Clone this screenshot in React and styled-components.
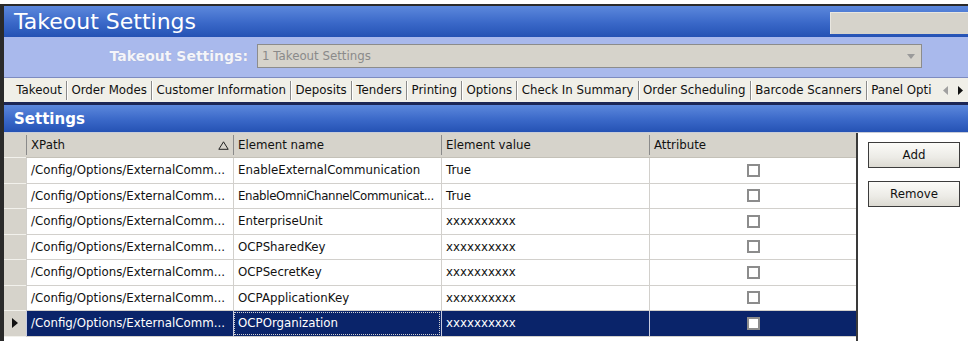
import React from "react";
import styled, { createGlobalStyle } from "styled-components";

const Global = createGlobalStyle`
  html, body { margin: 0; padding: 0; background: #fff; }
  body { font-family: "DejaVu Sans", sans-serif; }
`;

const Page = styled.div`
  width: 968px;
  height: 343px;
  padding-top: 4px;
  box-sizing: border-box;
  overflow: hidden;
  background: #fff;
`;

const Win = styled.div`
  border-top: 2px solid #2a2a2a;
  border-left: 4px solid #2a2a2a;
  height: 337px;
  box-sizing: border-box;
  display: flex;
  flex-direction: column;
`;

const TitleBar = styled.div`
  height: 31px;
  flex: none;
  background: linear-gradient(#5c88dc, #3a68c8 55%, #2552b4);
  display: flex;
  justify-content: space-between;
  align-items: flex-start;
`;

const Title = styled.div`
  color: #fff;
  font-family: "DejaVu Sans", sans-serif;
  font-size: 22px;
  line-height: 32px;
  padding-left: 10px;
`;

const CornerBox = styled.div`
  width: 138px;
  height: 22px;
  margin-top: 6px;
  background: #d6d3cb;
  border-top: 1px solid #e8e6e0;
  border-left: 1px solid #e8e6e0;
  box-sizing: border-box;
`;

const SubBar = styled.div`
  height: 41px;
  flex: none;
  background: #a9b9ec;
  border-bottom: 1px solid #7d8bc0;
  display: flex;
  align-items: center;
  box-sizing: border-box;
  padding-bottom: 2px;
`;

const SubLabel = styled.div`
  width: 244px;
  text-align: right;
  font-family: "DejaVu Sans", sans-serif;
  font-weight: bold;
  font-size: 14px;
  color: #f4f5fb;
  text-shadow: 0 0 1px #9aa0c0;
`;

const Select = styled.div`
  margin-left: 9px;
  width: 665px;
  height: 24px;
  box-sizing: border-box;
  background: #d6d3cb;
  border: 1px solid #8c8c8c;
  display: flex;
  align-items: center;
  justify-content: space-between;
  padding: 0 6px 0 4px;
  color: #8a8a8a;
  font-size: 11.8px;
`;

const TabBar = styled.div`
  height: 27px;
  flex: none;
  background: #f0efe8;
  border-bottom: 3px solid #1c2655;
  box-sizing: border-box;
  display: flex;
  align-items: center;
  padding-left: 8px;
  font-size: 11.8px;
  color: #111;
  white-space: nowrap;
  overflow: hidden;
`;

const Tab = styled.div`
  padding: 0 4.3px;
  height: 19px;
  line-height: 19px;
  border-right: ${(p) => (p.last ? "none" : "1px solid #8a8a8a")};
  box-shadow: ${(p) => (p.last ? "none" : "1px 0 0 #fff")};
  flex: none;
`;

const Arrows = styled.div`
  display: flex;
  gap: 10px;
  align-items: center;
  margin-left: 7px;
`;

const SettingsBar = styled.div`
  height: 28px;
  flex: none;
  box-sizing: border-box;
  background: linear-gradient(#5c88dc, #3a68c8 55%, #2552b4);
  color: #fff;
  font-family: "DejaVu Sans", sans-serif;
  font-weight: bold;
  font-size: 15px;
  display: flex;
  align-items: center;
  padding-left: 10px;
  border-bottom: 1px solid #c8ccd8;
`;

const Body = styled.div`
  flex: 1;
  display: flex;
  background: #fff;
`;

const Grid = styled.div`
  width: 854px;
  border-right: 2px solid #3a3a3a;
  box-sizing: border-box;
  display: flex;
  flex-direction: column;
`;

const Row = styled.div`
  display: grid;
  grid-template-columns: 22px 207px 208px 208px 207px;
  height: ${(p) => (p.header ? "25px" : "25.5px")};
  flex: none;
  box-sizing: border-box;
  font-size: 11.8px;
  background: ${(p) => (p.header ? "#d6d3cb" : p.selected ? "#0a246a" : "#fff")};
  color: ${(p) => (p.selected ? "#fff" : "#111")};
  border-bottom: 1px solid ${(p) => (p.header ? "#c4c1b8" : "#d2d0cc")};
`;

const Selector = styled.div`
  background: #d6d3cb;
  border-bottom: 1px solid #f2f1ec;
  margin-bottom: -1px;
  display: flex;
  align-items: center;
  justify-content: center;
`;

const HeadCell = styled.div`
  border-left: 1px solid #8a8a8a;
  margin: 2px 0;
  padding: 0 4px;
  display: flex;
  align-items: center;
  justify-content: space-between;
`;

const Cell = styled.div`
  border-left: 1px solid ${(p) => (p.selected ? "#c8cce0" : "#d2d0cc")};
  padding: 0 4px;
  display: flex;
  align-items: center;
  justify-content: ${(p) => (p.center ? "center" : "flex-start")};
  white-space: nowrap;
  overflow: hidden;
  letter-spacing: ${(p) => (p.tight ? "-0.35px" : "normal")};
  outline: ${(p) => (p.focus ? "1px dotted #d0d0d0" : "none")};
  outline-offset: -2px;
`;

const Check = styled.div`
  width: 13px;
  height: 13px;
  box-sizing: border-box;
  border: 2px solid #8c8c8c;
  background: ${(p) => (p.selected ? "#fff" : "transparent")};
`;

const Side = styled.div`
  display: flex;
  flex-direction: column;
  gap: 13px;
  padding: 9px 0 0 10px;
`;

const Button = styled.button`
  width: 92px;
  height: 26px;
  border: 1px solid #3c3c3c;
  background: linear-gradient(#fbfbf8, #ecebe6 60%, #dcdad2);
  font-family: "DejaVu Sans", sans-serif;
  font-size: 11.8px;
  color: #111;
  padding: 0;
`;

const tabs = [
  "Takeout",
  "Order Modes",
  "Customer Information",
  "Deposits",
  "Tenders",
  "Printing",
  "Options",
  "Check In Summary",
  "Order Scheduling",
  "Barcode Scanners",
  "Panel Opti",
];

const rows = [
  ["EnableExternalCommunication", "True"],
  ["EnableOmniChannelCommunicat...", "True"],
  ["EnterpriseUnit", "xxxxxxxxxx"],
  ["OCPSharedKey", "xxxxxxxxxx"],
  ["OCPSecretKey", "xxxxxxxxxx"],
  ["OCPApplicationKey", "xxxxxxxxxx"],
  ["OCPOrganization", "xxxxxxxxxx"],
];

export default function App() {
  return (
    <Page>
      <Global />
      <Win>
        <TitleBar>
          <Title>Takeout Settings</Title>
          <CornerBox />
        </TitleBar>
        <SubBar>
          <SubLabel>Takeout Settings:</SubLabel>
          <Select>
            <span>1 Takeout Settings</span>
            <svg width="8" height="5" viewBox="0 0 8 5">
              <path d="M0 0h8L4 5z" fill="#9a9a9a" />
            </svg>
          </Select>
        </SubBar>
        <TabBar>
          {tabs.map((t, i) => (
            <Tab key={t} last={i === tabs.length - 1}>
              {t}
            </Tab>
          ))}
          <Arrows>
            <svg width="5" height="9" viewBox="0 0 5 9">
              <path d="M5 0v9L0 4.5z" fill="#a0a0a0" />
            </svg>
            <svg width="5" height="9" viewBox="0 0 5 9">
              <path d="M0 0v9l5-4.5z" fill="#111" />
            </svg>
          </Arrows>
        </TabBar>
        <SettingsBar>Settings</SettingsBar>
        <Body>
          <Grid>
            <Row header>
              <Selector />
              <HeadCell>
                <span>XPath</span>
                <svg width="11" height="9" viewBox="0 0 11 9">
                  <path d="M5.5 0.8L10.2 8.3H0.8z" fill="none" stroke="#222" strokeWidth="1" />
                </svg>
              </HeadCell>
              <HeadCell>Element name</HeadCell>
              <HeadCell>Element value</HeadCell>
              <HeadCell>Attribute</HeadCell>
            </Row>
            {rows.map(([name, value], i) => {
              const sel = i === rows.length - 1;
              return (
                <Row key={name} selected={sel}>
                  <Selector>
                    {sel && (
                      <svg width="6" height="10" viewBox="0 0 6 10">
                        <path d="M0 0v10l6-5z" fill="#111" />
                      </svg>
                    )}
                  </Selector>
                  <Cell selected={sel}>/Config/Options/ExternalComm...</Cell>
                  <Cell selected={sel} focus={sel} tight={name.length > 28}>
                    {name}
                  </Cell>
                  <Cell selected={sel}>{value}</Cell>
                  <Cell selected={sel} center>
                    <Check selected={sel} />
                  </Cell>
                </Row>
              );
            })}
          </Grid>
          <Side>
            <Button>Add</Button>
            <Button>Remove</Button>
          </Side>
        </Body>
      </Win>
    </Page>
  );
}
